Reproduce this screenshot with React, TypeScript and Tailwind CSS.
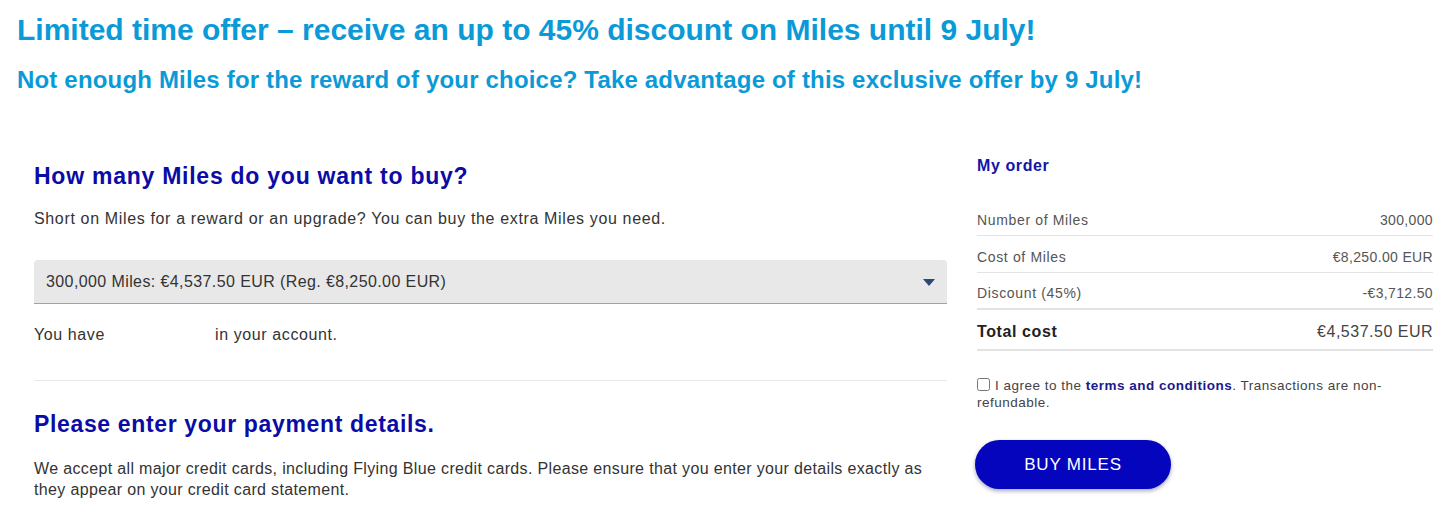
export default function App() {
  const rows = [
    { label: "Number of Miles", value: "300,000" },
    { label: "Cost of Miles", value: "€8,250.00 EUR" },
    { label: "Discount (45%)", value: "-€3,712.50", thick: true },
  ];

  return (
    <div className="min-h-[516px] bg-white font-['Liberation_Sans',Arial,sans-serif] text-[#333]">
      <div className="px-[17px] pt-[12px]">
        <h1 className="text-[30px] leading-[36px] font-bold text-[#0a9ad8]">
          Limited time offer – receive an up to 45% discount on Miles until 9 July!
        </h1>
        <h2 className="mt-[18px] text-[24px] leading-[28px] font-bold tracking-[0.18px] text-[#0a9ad8]">
          Not enough Miles for the reward of your choice? Take advantage of this exclusive offer by 9 July!
        </h2>
      </div>

      <div className="flex px-[34px] pt-[60px]">
        <div className="w-[913px] shrink-0">
          <h3 className="mt-[8px] text-[23px] leading-[28px] font-bold tracking-[0.75px] text-[#0b0ba6]">
            How many Miles do you want to buy?
          </h3>
          <p className="mt-[19px] text-[16px] leading-[20px] tracking-[0.65px]">
            Short on Miles for a reward or an upgrade? You can buy the extra Miles you need.
          </p>
          <div className="mt-[31px] flex h-[44px] items-center justify-between rounded-t-[4px] border-b border-[#9aa3b5] bg-[#e8e8e9] pl-[12px] pr-[12px] text-[16px] tracking-[0.4px]">
            <span>300,000 Miles: €4,537.50 EUR (Reg. €8,250.00 EUR)</span>
            <svg width="12" height="7" viewBox="0 0 12 7" className="mt-[2px]">
              <path d="M0 0h12L6 7z" fill="#2c4776" />
            </svg>
          </div>
          <p className="mt-[21px] text-[16px] leading-[20px] tracking-[0.6px]">
            You have <span className="inline-block w-[100px]" /> in your account.
          </p>
          <div className="mt-[35px] h-px bg-[#e8e8e8]" />
          <h3 className="mt-[29px] text-[23px] leading-[28px] font-bold tracking-[0.65px] text-[#0b0ba6]">
            Please enter your payment details.
          </h3>
          <p className="mt-[20px] text-[16px] leading-[21px] tracking-[0.35px]">
            We accept all major credit cards, including Flying Blue credit cards. Please ensure that you enter your details exactly as
            they appear on your credit card statement.
          </p>
        </div>

        <div className="ml-[30px] w-[456px] shrink-0">
          <h4 className="mt-[2px] text-[16px] leading-[20px] font-bold tracking-[0.6px] text-[#1414a8]">My order</h4>
          <div className="mt-[23px]">
            {rows.map((r) => (
              <div
                key={r.label}
                className={`flex h-[37px] items-center justify-between pt-[6px] text-[14px] text-[#555] ${
                  r.thick ? "border-b-2 border-[#e3e3e3]" : "border-b border-[#e3e3e3]"
                }`}
              >
                <span className="tracking-[0.65px]">{r.label}</span>
                <span className="tracking-[0.35px]">{r.value}</span>
              </div>
            ))}
            <div className="flex h-[41px] items-center justify-between border-b-2 border-[#e3e3e3] pt-[4px] text-[16px]">
              <span className="font-bold tracking-[0.6px] text-[#222]">Total cost</span>
              <span className="tracking-[0.5px] text-[#444]">€4,537.50 EUR</span>
            </div>
          </div>
          <label className="mt-[26px] block pr-[30px] text-[13.5px] leading-[17px] tracking-[0.5px] text-[#444]">
            <input type="checkbox" className="mr-[5px] h-[13px] w-[13px] align-[-1px]" />
            I agree to the <span className="font-bold text-[#1a1a8c]">terms and conditions</span>. Transactions are non-refundable.
          </label>
          <button className="mt-[29px] -ml-[2px] h-[49px] w-[196px] rounded-full bg-[#0505bd] text-[17px] tracking-[0.8px] text-white shadow-[0_2px_4px_rgba(0,0,80,0.35)]">
            BUY MILES
          </button>
        </div>
      </div>
    </div>
  );
}
